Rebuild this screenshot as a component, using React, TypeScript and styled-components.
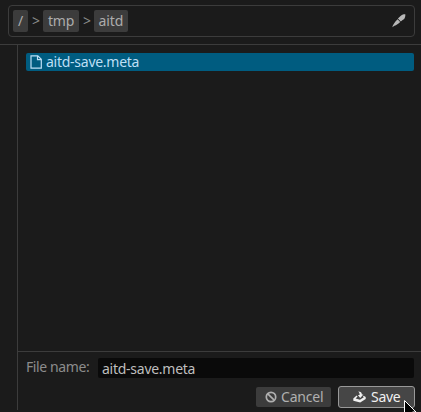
import React from "react";
import styled, { createGlobalStyle } from "styled-components";

const Global = createGlobalStyle`
  * { box-sizing: border-box; }
  body { margin: 0; background: #1b1b1b; overflow: hidden; }
`;

const Dialog = styled.main`
  position: relative;
  width: 421px;
  height: 412px;
  display: flex;
  flex-direction: column;
  background: #1b1b1b;
  color: #8c8c8c;
  font: 400 14px/18px "Noto Sans", "Open Sans", sans-serif;
  white-space: nowrap;
`;

const Header = styled.header`
  height: 45px;
  padding: 5px 6px 0 8px;
  border-bottom: 1px solid #3c3c3c;
`;

const PathBar = styled.nav`
  height: 32px;
  display: flex;
  align-items: center;
  padding: 0 8px 0 4px;
  border: 1px solid #3c3c3c;
  border-radius: 4px;
`;

const Crumb = styled.button<{ $width: number }>`
  width: ${(p) => p.$width}px;
  height: 22px;
  padding: 0;
  display: flex;
  align-items: center;
  justify-content: center;
  border: 0;
  border-radius: 2px;
  background: #3c3c3c;
  color: #acacac;
  font: inherit;
`;

const Separator = styled.span`
  width: 15px;
  padding-left: 1px;
  text-align: center;
`;

const EditIcon = styled.svg`
  margin-left: auto;
`;

const Body = styled.section`
  flex: none;
  height: 365px;
  margin-left: 17px;
  display: flex;
  flex-direction: column;
  border-left: 1px solid #3c3c3c;
`;

const FileList = styled.div`
  height: 306px;
  padding: 8px 7px 0 8px;
`;

const FileRow = styled.div`
  height: 18px;
  display: flex;
  align-items: center;
  padding-left: 4px;
  gap: 4px;
  border-radius: 2px;
  background: #005c80;
  color: #bddff5;
`;

const Label = styled.span<{ $width: number; $spacing?: number }>`
  width: ${(p) => p.$width}px;
  letter-spacing: ${(p) => p.$spacing ?? 0}px;
  text-align: left;
`;

const FieldLabel = styled(Label)`
  padding-bottom: 2px;
`;

const Footer = styled.footer`
  border-top: 1px solid #3c3c3c;
  padding: 6px 6px 0 8px;
`;

const NameRow = styled.label`
  display: flex;
  align-items: center;
  height: 20px;
  margin-right: 1px;
`;

const NameField = styled.input`
  flex: 1;
  min-width: 0;
  height: 20px;
  margin-left: 8px;
  padding: 0 4px;
  border: 0;
  border-radius: 2px;
  outline: none;
  background: #0a0a0a;
  color: #bebebe;
  font: inherit;
  letter-spacing: -0.26px;
`;

const Actions = styled.div`
  display: flex;
  align-items: center;
  justify-content: flex-end;
  gap: 7px;
  margin-top: 8px;
`;

const Button = styled.button<{ $primary?: boolean }>`
  width: ${(p) => (p.$primary ? 77 : 75)}px;
  height: ${(p) => (p.$primary ? 22 : 20)}px;
  display: flex;
  align-items: center;
  padding: 0 0 0 ${(p) => (p.$primary ? 14 : 9)}px;
  gap: ${(p) => (p.$primary ? 5 : 4)}px;
  border: ${(p) => (p.$primary ? "1px solid #999" : "0")};
  border-radius: ${(p) => (p.$primary ? 3 : 2)}px;
  background: ${(p) => (p.$primary ? "#464646" : "#3c3c3c")};
  color: ${(p) => (p.$primary ? "#f0f0f0" : "#b0b0b0")};
  font: inherit;
`;

const Pointer = styled.svg`
  position: absolute;
  left: 404px;
  top: 400px;
`;

export default function App() {
  return (
    <Dialog>
      <Global />
      <Header>
        <PathBar>
          <Crumb $width={15}>/</Crumb>
          <Separator>&gt;</Separator>
          <Crumb $width={36}><Label $width={26} $spacing={-0.2}>tmp</Label></Crumb>
          <Separator>&gt;</Separator>
          <Crumb $width={34}><Label $width={25} $spacing={-0.1}>aitd</Label></Crumb>
          <EditIcon width="14" height="14" viewBox="0 0 14 14">
            <path d="M.3 13.2C.8 11 2.3 8.4 5.6 5.2L8.2 7.9C6.4 9.6 4.4 11 2.4 11.7Z" fill="#b8b8b8" />
            <path d="M5.9 4.6 9.1 1.5C10.4.5 12 .2 13.3.3 13.5 1.5 13.2 3.4 12.2 4.9L10.3 6.2 8.8 7.5Z" fill="#b8b8b8" />
          </EditIcon>
        </PathBar>
      </Header>
      <Body>
        <FileList>
          <FileRow>
            <svg width="12" height="14" viewBox="0 0 12 14" fill="none" stroke="currentColor" strokeWidth="1.2">
              <path d="M1 .8h6.8L11.3 4.3V13.2H1ZM7.5 1v3.6H11" />
            </svg>
            <Label $width={96} $spacing={-0.26}>aitd-save.meta</Label>
          </FileRow>
        </FileList>
        <Footer>
          <NameRow>
            <FieldLabel $width={64} $spacing={-0.4}>File name:</FieldLabel>
            <NameField defaultValue="aitd-save.meta" />
          </NameRow>
          <Actions>
            <Button>
              <svg width="12" height="12" viewBox="0 0 12 12" fill="none" stroke="currentColor" strokeWidth="1.7">
                <circle cx="6" cy="6" r="4.7" />
                <path d="m2.8 2.8 6.4 6.4" />
              </svg>
              <Label $width={44} $spacing={-0.2}>Cancel</Label>
            </Button>
            <Button $primary>
              <svg width="13" height="12" viewBox="0 0 13 12">
                <path d="M.3 7.6 3.6 4.6 4.6 5.4 2.6 7.4 6.9 8.8 10.8 6.2 10 5.4 10.6 4.8 12.7 6V8.1L7.2 11.6.3 9.7Z" fill="currentColor" />
                <path d="M5.2.4C7.8.4 8.8 1.5 8.9 3.5H10.4L7.2 7 4.9 3.9H6.6C6.7 2.3 6.3 1.2 5.2.4Z" fill="currentColor" />
              </svg>
              <Label $width={33} $spacing={-0.3}>Save</Label>
            </Button>
          </Actions>
        </Footer>
      </Body>
      <Pointer width="17" height="12" viewBox="0 0 17 12">
        <path d="M.5.5V17L5 13l3 7h4L8.5 12H12Z" fill="#000" stroke="#fff" />
      </Pointer>
    </Dialog>
  );
}
